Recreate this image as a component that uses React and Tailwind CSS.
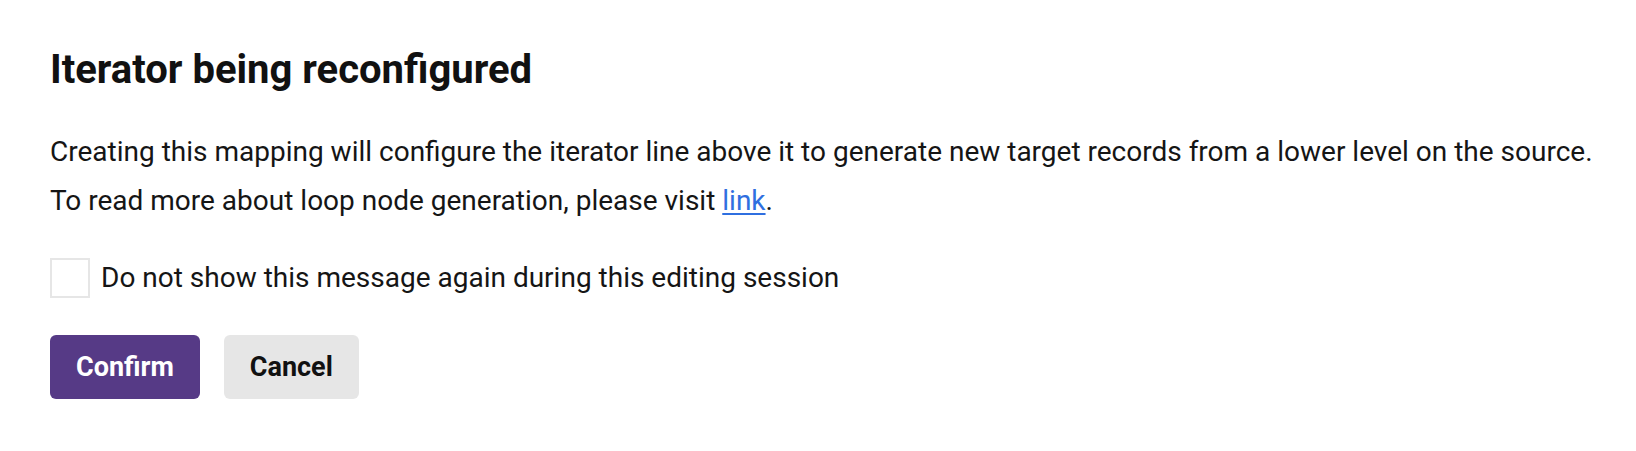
export default function App() {
  return (
    <div className="min-h-[451px] w-[1636px] bg-white pl-[50px] pt-[46px] text-[#151515]" style={{ fontFamily: 'Roboto, "Liberation Sans", sans-serif' }}>
      <h1 className="text-[40px] font-bold leading-[48px] text-[#111111]">Iterator being reconfigured</h1>
      <p className="mt-[34px] text-[28px] leading-[48.6px]">
        Creating this mapping will configure the iterator line above it to generate new target records from a lower level on the source.
        <br />
        To read more about loop node generation, please visit{" "}
        <a href="#" className="text-[#2f6fe0] underline underline-offset-[3px]">link</a>.
      </p>
      <label className="mt-[29px] flex items-center gap-[11px] text-[28px] leading-[48.6px]">
        <span className="h-[40px] w-[40px] border-2 border-[#e6e6e6] bg-white" />
        <span>Do not show this message again during this editing session</span>
      </label>
      <div className="mt-[32px] flex gap-[24px]">
        <button className="h-[64px] rounded-[6px] bg-[#563a86] px-[26px] text-[27px] font-bold text-white">Confirm</button>
        <button className="h-[64px] rounded-[6px] bg-[#e6e6e6] px-[26px] text-[27px] font-bold text-[#111111]">Cancel</button>
      </div>
    </div>
  );
}
